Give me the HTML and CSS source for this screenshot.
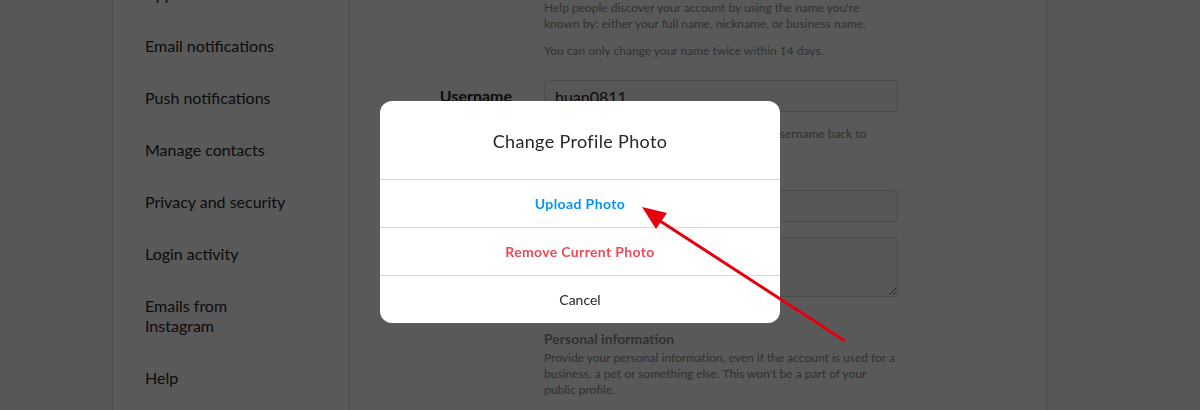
FILE: index.html
```html
<!DOCTYPE html>
<html lang="en">

<head>
    <meta charset="UTF-8">
    <meta name="viewport" content="width=device-width, initial-scale=1.0">
    <title>Edit Profile</title>
    <link rel="stylesheet" href="styles.css">
</head>

<body>
    <div class="settings">
        <!-- Sidebar menu -->
        <ul class="menu">
            <li>Edit profile</li>
            <li>Change password</li>
            <li>Apps and websites</li>
            <li>Email notifications</li>
            <li>Push notifications</li>
            <li>Manage contacts</li>
            <li>Privacy and security</li>
            <li>Login activity</li>
            <li>Emails from Instagram</li>
            <li>Help</li>
        </ul>

        <!-- Form -->
        <div class="main">
            <div class="field-row avatar-row">
                <div class="field-label"><span class="avatar"></span></div>
                <div class="field-input">
                    <div class="avatar-name">huan0811</div>
                    <div class="avatar-link">Change profile photo</div>
                </div>
            </div>

            <div class="field-row row-name">
                <label class="field-label">Name</label>
                <div class="field-input">
                    <input type="text" value="Huan">
                    <p class="help help-first">Help people discover your account by using the name you're known by: either your full name, nickname, or business name.</p>
                    <p class="help help-second">You can only change your name twice within 14 days.</p>
                </div>
            </div>

            <div class="field-row row-username">
                <label class="field-label">Username</label>
                <div class="field-input">
                    <input type="text" value="huan0811">
                    <p class="help help-username">In most cases, you'll be able to change your username back to huan0811 for another 14 days.</p>
                </div>
            </div>

            <div class="field-row row-website">
                <label class="field-label">Website</label>
                <div class="field-input">
                    <input type="text" placeholder="Website">
                </div>
            </div>

            <div class="field-row row-bio">
                <label class="field-label">Bio</label>
                <div class="field-input">
                    <textarea></textarea>
                </div>
            </div>

            <div class="field-row row-personal">
                <div class="field-label"></div>
                <div class="field-input">
                    <h2 class="personal-title">Personal information</h2>
                    <p class="help">Provide your personal information, even if the account is used for a business, a pet or something else. This won't be a part of your public profile.</p>
                </div>
            </div>
        </div>
    </div>

    <!-- Dialog -->
    <div class="backdrop">
        <div class="dialog">
            <h3 class="dialog-title">Change Profile Photo</h3>
            <button class="dialog-btn btn-upload">Upload Photo</button>
            <button class="dialog-btn btn-remove">Remove Current Photo</button>
            <button class="dialog-btn btn-cancel">Cancel</button>
        </div>
    </div>

    <svg class="arrow" width="1200" height="410" viewBox="0 0 1200 410">
        <line x1="845" y1="341" x2="657" y2="219" stroke="#e5000f" stroke-width="3" />
        <polygon points="642,207 667,213 656,229" fill="#e5000f" />
    </svg>
</body>

</html>
```

FILE: styles.css
```css
body {
    font-family: Lato, "Liberation Sans", sans-serif;
    margin: 0;
    background-color: #fafafa;
    color: #262626;
    overflow: hidden;
}

.settings {
    display: flex;
    width: 933px;
    margin: -136px 0 0 112px;
    background-color: #fff;
    border: 1px solid #dbdbdb;
    height: 700px;
}

/* Sidebar */
.menu {
    list-style: none;
    margin: -1px 0 0;
    padding: 0;
    width: 236px;
    border-right: 1px solid #dbdbdb;
    flex-shrink: 0;
}

.menu li {
    font-size: 16px;
    line-height: 20px;
    padding: 16px 56px 16px 32px;
}

/* Form */
.main {
    flex: 1;
}

.field-row {
    display: grid;
    grid-template-columns: 162px 354px;
    column-gap: 32px;
    align-items: start;
}

.field-label {
    font-size: 16px;
    font-weight: 700;
    line-height: 32px;
    text-align: right;
}

.avatar-row {
    margin-top: 32px;
    height: 42px;
}

.avatar {
    display: inline-block;
    width: 38px;
    height: 38px;
    border-radius: 50%;
    background-color: #dbdbdb;
}

.avatar-name {
    font-size: 20px;
    line-height: 22px;
}

.avatar-link {
    font-size: 14px;
    font-weight: 700;
    color: #0095f6;
}

.row-name {
    margin-top: 16px;
}

.row-username {
    margin-top: 21px;
}

.row-website {
    margin-top: 32px;
}

.row-bio {
    margin-top: 15px;
}

.row-personal {
    margin-top: 33px;
}

input,
textarea {
    display: block;
    width: 100%;
    box-sizing: border-box;
    border: 1px solid #dbdbdb;
    border-radius: 3px;
    background-color: #fafafa;
    color: #262626;
    font-family: inherit;
    font-size: 16px;
    padding: 0 10px;
}

input {
    height: 32px;
}

textarea {
    height: 60px;
    padding: 6px 10px;
}

input::placeholder {
    color: transparent;
}

.help {
    margin: 0;
    font-size: 12px;
    line-height: 16px;
    color: #8e8e8e;
}

.help-first {
    margin-top: 13px;
    max-width: 340px;
}

.help-second {
    margin-top: 11px;
}

.help-username {
    margin-top: 14px;
}

.personal-title {
    margin: 0 0 2px;
    font-size: 14px;
    line-height: 18px;
    font-weight: 700;
    color: #8e8e8e;
}

/* Dialog */
.backdrop {
    position: fixed;
    inset: 0;
    background-color: rgba(0, 0, 0, 0.65);
    display: flex;
    justify-content: center;
    align-items: flex-start;
    padding: 101px 40px 0 0;
}

.dialog {
    width: 400px;
    background-color: #fff;
    border-radius: 12px;
    overflow: hidden;
    display: flex;
    flex-direction: column;
}

.dialog-title {
    margin: 0;
    height: 78px;
    line-height: 80px;
    text-align: center;
    font-size: 18px;
    font-weight: 400;
    letter-spacing: 0.35px;
    color: #262626;
}

.dialog-btn {
    height: 48px;
    border: none;
    border-top: 1px solid #dbdbdb;
    background: none;
    font-family: inherit;
    font-size: 14px;
    cursor: pointer;
    padding: 0;
}

.btn-upload {
    color: #0095f6;
    font-weight: 700;
    letter-spacing: 0.4px;
}

.btn-remove {
    color: #ed4956;
    font-weight: 700;
    letter-spacing: 0.35px;
}

.btn-cancel {
    color: #262626;
}

.arrow {
    position: fixed;
    left: 0;
    top: 0;
    pointer-events: none;
}
```
